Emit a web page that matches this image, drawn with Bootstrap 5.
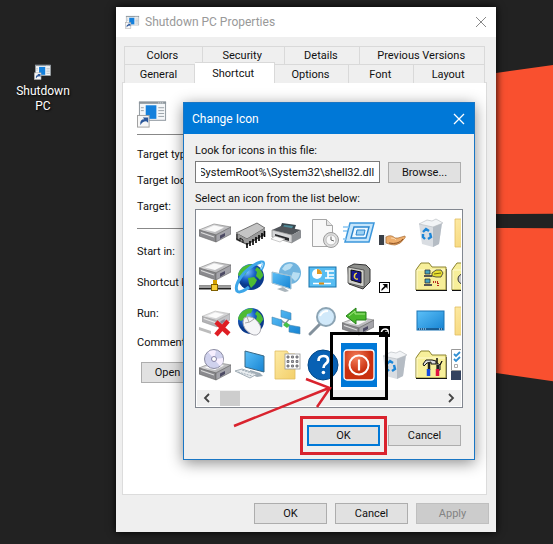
<!DOCTYPE html>
<html lang="en">
<head>
<meta charset="utf-8">
<meta name="viewport" content="width=device-width, initial-scale=1">
<title>Shutdown PC Properties</title>
<link href="https://cdn.jsdelivr.net/npm/bootstrap@5.3.0/dist/css/bootstrap.min.css" rel="stylesheet">
<style>
body{background:#222;font-family:Roboto,"Liberation Sans",sans-serif;font-size:11px;line-height:16px;color:#111}
.desktop{min-height:100vh;overflow:hidden}
.wallpaper{left:496px;top:0;width:400px;height:544px}
.shortcut-item{left:4px;top:64px;width:78px;color:#fff;font-size:12px;line-height:15px;text-shadow:1px 1px 2px #000}
.shortcut-item:hover{color:#fff}
.win{background:#efefef}
.props{left:116px;top:7px;width:380px;box-shadow:0 0 8px #000}
.win-title{font-size:12px;gap:5px}
.props .win-title{height:30px;background:#fff;color:#999;padding:0 9px}
.x-btn{border:0;background:none;padding:0;line-height:0;color:inherit}
.tab-area{padding:9px 11px 0 8px}
.tabs-line{height:18px}
.tab-btn{border:1px solid #d9d9d9;border-left-width:0;border-bottom:0;background:#efefef;padding:0 2px 0 0;color:#111;line-height:17px}
.tab-btn:first-child{border-left-width:1px}
.tab-btn.active{background:#fff;margin-top:-2px;height:21px;position:relative}
.pane{margin:0 9px 0 6px;height:413px;border:1px solid #dcdcdc;background:#fff;padding:17px 14px 0}
.pane hr{margin:0;border-color:#888;opacity:1}
.pane-icon{margin-bottom:6px}
.fields{padding-top:7px}
.fields.target{padding-bottom:8px}
.target .field{line-height:26px}
.options .field{line-height:31px}
.options .field:last-child{line-height:27px}
.dlg-btn{border:1px solid #adadad;background:#e1e1e1;width:73px;height:21px;padding:0;line-height:17px;color:#111}
.dlg-btn:disabled{background:#ccc;border-color:#bfbfbf;color:#838383}
.dlg-btn.primary{border:2px solid #0078d7}
.open-btn{margin-top:6px}
.props-foot{padding:8px 7px}
.dialog-win{left:183px;top:102px;width:292px;border:1px solid #1a76c4;box-shadow:0 3px 14px rgba(0,0,0,.45)}
.dialog-win .win-title{height:31px;background:#0078d7;color:#fff;padding:0 9px 0 8px}
.dialog-body{padding:9px 13px 13px 11px}
.dialog-label{display:block;margin-bottom:2px}
.path-input{border:1px solid #7a7a7a;background:#fff;height:22px;padding:0 5px;min-width:0;color:#111;outline:0}
.icon-list{border:1px solid #828790;background:#fff;padding:1px;margin-right:-2px;height:199px}
.icon-grid{grid-template-columns:repeat(8,36px);grid-auto-rows:44px;overflow:hidden;height:179px}
.icon-cell{border:0;background:none;padding:6px 2px;line-height:0}
.icon-cell.selected{background:#0078d7}
.icon-cell svg{width:32px;height:32px;overflow:visible}
.scroll-bar{height:16px;background:#f0f0f0;color:#555;padding:0 6px}
.thumb{width:20px;height:15px;background:#cdcdcd;margin-left:9px}
.dialog-foot{margin-top:17px}
.marks{left:0;top:0;pointer-events:none}
</style>
<script src="https://cdn.jsdelivr.net/npm/bootstrap@5.3.0/dist/js/bootstrap.bundle.min.js"></script>
</head>
<body>
<svg width="0" height="0" class="position-absolute" aria-hidden="true">
<defs>
<linearGradient id="gMetal" x1="0" y1="0" x2="1" y2="1"><stop offset="0" stop-color="#f4f4f4"/><stop offset="1" stop-color="#9a9a9e"/></linearGradient>
<linearGradient id="gScreen" x1="0" y1="0" x2="1" y2="1"><stop offset="0" stop-color="#5cc0f8"/><stop offset="1" stop-color="#1683d2"/></linearGradient>
<radialGradient id="gSea" cx=".35" cy=".3"><stop offset="0" stop-color="#7cc4ff"/><stop offset=".6" stop-color="#1a62c8"/><stop offset="1" stop-color="#0b3a8c"/></radialGradient>
<linearGradient id="gFolder" x1="0" y1="0" x2="1" y2="1"><stop offset="0" stop-color="#fdeaa4"/><stop offset="1" stop-color="#f3cf6a"/></linearGradient>
<radialGradient id="gPower" cx=".4" cy=".25"><stop offset="0" stop-color="#f5805c"/><stop offset="1" stop-color="#c9300f"/></radialGradient>
<symbol id="app" viewBox="0 0 32 28">
<rect x="2.500" y="1.500" width="27" height="19" fill="#f4f6f8" stroke="#8c959c"/><path d="M2 2.500h28" stroke="#8c959c" stroke-width="2"/><path d="M22 2.500h6" stroke="#e8e8e8" stroke-width="1" stroke-dasharray="1 1"/>
<rect x="9" y="5" width="11" height="14" fill="#1480dc"/><path d="M22 7.500h6M22 10.500h6M22 13.500h6M22 16.500h6M4 7.500h3M4 10.500h3" stroke="#9aa2a8"/>
<rect x=".5" y="15.500" width="12" height="12" fill="#f7f7f7" stroke="#a0a0a0"/><path d="M3.500 25.500q-1-6 4-6l-1.500-2h5.500v5.500l-2-1.500q-4 0-6 4z" fill="#2b579a"/>
</symbol>
<symbol id="drive" viewBox="0 0 32 32">
<path d="M0 13 15 7 32 10 17 18z" fill="url(#gMetal)" stroke="#888" stroke-width=".7"/><path d="M0 13 17 18v7L0 19z" fill="#8a8a8e" stroke="#666" stroke-width=".6"/><path d="M17 18 32 10v7L17 25z" fill="#a4a4aa" stroke="#666" stroke-width=".6"/>
<path d="m6 12.500 9-4 10 2-9 4.500z" fill="#fafafa"/><path d="m2 15.500 13 4.500" stroke="#ddd" stroke-width="1.200"/><path d="m21 18.500 5-2.500v3l-5 3z" fill="#4c4a63"/>
</symbol>
<symbol id="globe" viewBox="0 0 32 32">
<circle cx="16" cy="16" r="13" fill="url(#gSea)"/><path d="M8 6q7-4 10-2l-2 4-4 1-1 4-5 3-3-2q1-5 5-8zM13 17l6-1 3 3-2 4-4 4-2-4zM22 6q6 4 6 9l-3 4-4-4 1-4-2-2z" fill="#4dbb35"/>
</symbol>
<symbol id="bin" viewBox="0 0 32 32">
<path d="M4 7 27 5 24 27 18 30 7 27z" fill="#d9dde2"/><path d="M18 9 27 6 24 27 18 30z" fill="#b5bcc4"/><path d="m4 7 8-4 5 1 4-2 7 4-10 4z" fill="#f2f4f6" stroke="#b4b9be" stroke-width=".6"/>
<path d="m8 15 3-3 3 2M15 16l1 4-3 2M10 22l-2-2v-3" fill="none" stroke="#1c86d8" stroke-width="2.400"/>
</symbol>
<symbol id="folder" viewBox="0 0 32 32"><path d="M5 2h12l2 3h6v25H5z" fill="url(#gFolder)" stroke="#e1bd60" stroke-width=".8"/></symbol>
<symbol id="oldfolder" viewBox="0 0 32 32"><path d="M1 29V9l2-3 3-4h8l3 4h14v23z" fill="#f7ef9a" stroke="#8c8430"/><path d="M2 28V9h28" fill="none" stroke="#fffbd0"/><path d="M1 29.500h31V8" fill="none" stroke="#111"/></symbol>
</defs>
</svg>
<main class="desktop position-relative">
<svg class="wallpaper position-absolute" viewBox="0 0 400 544" aria-hidden="true"><path d="M0 73 400 17v196L0 214zM0 228l400 1v202L0 373z" fill="#f9502f"/></svg>
<a href="#" class="shortcut-item position-absolute d-flex flex-column align-items-center text-center text-decoration-none"><svg width="18" height="16" class="mb-1"><use href="#app"/></svg><span>Shutdown<br>PC</span></a>

<section class="win props position-absolute" aria-label="Shutdown PC Properties">
<header class="win-title d-flex align-items-center"><svg width="15" height="14"><use href="#app"/></svg><span class="flex-grow-1">Shutdown PC Properties</span>
<button class="x-btn" aria-label="Close"><svg width="12" height="12"><path d="m1 1 10 10M11 1 1 11" stroke="#888"/></svg></button></header>
<nav class="tab-area" role="tablist">
<div class="tabs-line d-grid" style="grid-template-columns:79fr 82fr 76fr 125fr"><button class="tab-btn">Colors</button><button class="tab-btn">Security</button><button class="tab-btn">Details</button><button class="tab-btn">Previous Versions</button></div>
<div class="tabs-line d-grid" style="grid-template-columns:71fr 80fr 75fr 65fr 71fr"><button class="tab-btn">General</button><button class="tab-btn active">Shortcut</button><button class="tab-btn">Options</button><button class="tab-btn">Font</button><button class="tab-btn">Layout</button></div>
</nav>
<div class="pane">
<svg width="31" height="28" class="pane-icon d-block"><use href="#app"/></svg>
<hr>
<div class="fields target"><div class="field">Target type:</div><div class="field">Target location:</div><div class="field">Target:</div></div>
<hr>
<div class="fields options"><div class="field">Start in:</div><div class="field">Shortcut key:</div><div class="field">Run:</div><div class="field">Comment:</div></div>
<button class="dlg-btn open-btn ms-1">Open File</button>
</div>
<footer class="props-foot d-flex justify-content-end gap-2"><button class="dlg-btn">OK</button><button class="dlg-btn">Cancel</button><button class="dlg-btn" disabled>Apply</button></footer>
</section>

<section class="win dialog-win position-absolute" role="dialog" aria-label="Change Icon">
<header class="win-title d-flex align-items-center justify-content-between"><span>Change Icon</span><button class="x-btn" aria-label="Close"><svg width="12" height="12"><path d="m1 1 10 10M11 1 1 11" stroke="#fff" stroke-width="1.300"/></svg></button></header>
<div class="dialog-body">
<label for="path" class="dialog-label">Look for icons in this file:</label>
<div class="d-flex align-items-center gap-2"><input id="path" class="path-input flex-fill" value="%SystemRoot%\System32\shell32.dll"><button class="dlg-btn">Browse...</button></div>
<div class="dialog-label mt-2" id="listlabel">Select an icon from the list below:</div>
<div class="icon-list" aria-labelledby="listlabel">
<div class="icon-grid d-grid">
<button class="icon-cell" aria-label="Drive"><svg><use href="#drive"/></svg></button>
<button class="icon-cell" aria-label="Chip"><svg viewBox="0 0 32 32"><path d="M1 17 22 7l8 5v6L12 28 1 23z" fill="#555"/><path d="M1 16 22 6l8 5-18 11z" fill="#c4c4c4" stroke="#444" stroke-width=".7"/><path d="M12 22 30 11v5L12 27zM1 16l11 6v5L1 21z" fill="#999"/><path d="M12 26v5M15 24v5M18 22v6M21 20v6M24 18v6M27 16v6M29.500 14v6" stroke="#000" stroke-width="1.600"/><path d="M2 17v5l3 2v-3l3 2v3" fill="none" stroke="#111"/></svg></button>
<button class="icon-cell" aria-label="Printer"><svg viewBox="0 0 32 32"><path d="m11 6 14 2-3 9-14-3z" fill="#39474f"/><path d="m13 8 9 1-2 5-9-2z" fill="#4f8b99"/><path d="M1 13 10 9l20 4-9 5z" fill="#51555a"/><path d="M1 13 21 18v8L1 20z" fill="#d5d6d8" stroke="#777" stroke-width=".6"/><path d="m21 18 9-5v8l-9 5z" fill="#8b8e92"/><path d="m4 17 14 4v3L4 20z" fill="#26282b"/><path d="m4 19 10 3-5 3-9-3z" fill="#fafafa" stroke="#aaa" stroke-width=".6"/></svg></button>
<button class="icon-cell" aria-label="Recent document"><svg viewBox="0 0 32 32"><path d="M5.500 2.500h14l6 6v21h-20z" fill="#f8f8f8" stroke="#a6a6a6"/><path d="M19.500 2.500v6h6" fill="#e6e6e6" stroke="#a6a6a6"/><circle cx="24" cy="23" r="7.500" fill="#ddd" stroke="#9b9b9b"/><circle cx="24" cy="23" r="5" fill="#fafafa" stroke="#aaa" stroke-width=".7"/><path d="M24 19.500V23l3 1" fill="none" stroke="#666"/></svg></button>
<button class="icon-cell" aria-label="Run"><svg viewBox="0 0 32 32"><path d="M7 6h24l-5 19H2z" fill="#c5e5fb" stroke="#3b97dc" stroke-width="1.500"/><path d="M11 10h15l-3 11H8z" fill="#eef8ff" stroke="#2c86cf" stroke-width="1.400"/><path d="M14 13h8l-1 5h-8z" fill="#9bd0f3" stroke="#2c86cf"/><path d="M0 10h6M0 14h4M0 22h3" stroke="#86c5f2" stroke-width="1.500"/></svg></button>
<button class="icon-cell" aria-label="Shared"><svg viewBox="0 0 32 32"><path d="M0 18h5v10H0z" fill="#3a4048"/><path d="M5 18h2v10H5z" fill="#e8e8e8"/><path d="M7 20q5-3 9 1h3l7-2q1 1-1 3-3 5-9 6-4 0-9-2z" fill="#eeae6c" stroke="#a66a32" stroke-width=".7"/><path d="M10 26q9 2 14-4" fill="none" stroke="#8b4f20"/><path d="M12 21q4 0 5 2" stroke="#fbd9b0" fill="none"/></svg></button>
<button class="icon-cell" aria-label="Recycle bin"><svg><use href="#bin"/></svg></button>
<button class="icon-cell" aria-label="Folder"><svg><use href="#folder" x="-1"/></svg></button>

<button class="icon-cell" aria-label="Network drive"><svg viewBox="0 0 32 32"><use href="#drive" y="-6" width="32" height="32"/><path d="M16 19v5" stroke="#d5a200" stroke-width="4"/><path d="M0 26.500h32" stroke="#222" stroke-width="4"/><path d="M0 26h32" stroke="#c8c8c8" stroke-width="1.500"/><rect x="12.500" y="23.500" width="6" height="6" fill="#f7cf35" stroke="#806000"/></svg></button>
<button class="icon-cell" aria-label="Internet"><svg viewBox="0 0 32 32"><use href="#globe"/><path d="M26 9Q31 0 26 1 18 3 9 12-1 24 2 30q3 3 12-4" fill="none" stroke="#3da6e8" stroke-width="3"/><path d="M26 8q4-7 0-6" fill="none" stroke="#b8e4ff" stroke-width="1"/></svg></button>
<button class="icon-cell" aria-label="Network computer"><svg viewBox="0 0 32 32"><circle cx="19" cy="12" r="11" fill="#71b4de"/><path d="M14 4q6-3 8 0l-3 4-5 2-3-2zM22 11l7 1q-1 6-5 8l-4-4z" fill="#b8def2"/><path d="m1 11 19 4v13L1 22z" fill="url(#gScreen)" stroke="#e6f3fb"/><path d="m1 11 19 4v13L1 22z" fill="none" stroke="#5788a4" stroke-width=".5"/><path d="m6 28 8 3 4-1-6-4z" fill="#aab5bc"/></svg></button>
<button class="icon-cell" aria-label="Control panel"><svg viewBox="0 0 32 32"><rect x="2" y="6" width="27" height="20" fill="#58bdf2" stroke="#1672aa"/><circle cx="10" cy="13" r="5" fill="#fff"/><path d="M10 13V8a5 5 0 0 1 5 5z" fill="#e39a22"/><path d="M18 10h3v7h-3M21 10h6M21 14h6M21 17h6M6 22.500h18" stroke="#fff" stroke-width="1.700" fill="none"/><path d="M12 22.500h5" stroke="#d98d13" stroke-width="2"/></svg></button>
<button class="icon-cell" aria-label="Screen saver"><svg viewBox="0 0 32 32"><path d="m5 6 6-3 12 1 4 4v13l-7 7-14-5z" fill="#8e8f8c" stroke="#333"/><path d="m5 6 16 3v17L5 22z" fill="#cfcfca" stroke="#444" stroke-width=".8"/><path d="m8 9 10 2v11L8 19z" fill="#19198f" stroke="#111"/><path d="M14 12q-4 3-1 6l2 0q-4 1-4-3 0-3 3-3z" fill="#ffe23e" stroke="#ffe23e" stroke-width=".7"/></svg></button>
<button class="icon-cell" aria-label="Shortcut overlay"><svg viewBox="0 0 32 32"><rect x=".5" y="21.500" width="10" height="10" fill="#fff" stroke="#000"/><path d="M2.500 30v-2l3-3-2-2h5v5l-1.500-2z" fill="#000"/></svg></button>
<button class="icon-cell" aria-label="Network folder"><svg viewBox="0 0 32 32"><use href="#oldfolder"/><path d="M10 9h5v4h-5zM10 18h5v4h-5z" fill="#45a2bd" stroke="#333" stroke-width=".8"/><path d="M9 15h8M9 24h8" stroke="#555" stroke-width="2"/><path d="m17 12 4-3h5l2 3-2 4h-5l-4-1z" fill="#e8df32" stroke="#333" stroke-width=".8"/><path d="m19 13 7-1" stroke="#776f10"/><path d="M18 21h5v4" stroke="#b52b20" fill="none" stroke-width="2" stroke-dasharray="1 1"/></svg></button>
<button class="icon-cell" aria-label="Settings folder"><svg viewBox="0 0 32 32"><use href="#oldfolder"/><circle cx="12" cy="18" r="5" fill="#ccc" stroke="#333"/></svg></button>

<button class="icon-cell" aria-label="Disconnected drive"><svg viewBox="0 0 32 32"><g opacity=".65"><use href="#drive" y="-2" x="3" width="28" height="32"/><path d="m0 22 12 4v3L0 25z" fill="#999"/></g><path d="m17 17 13 12M29 16 17 30" stroke="#df1e24" stroke-width="4.500"/></svg></button>
<button class="icon-cell" aria-label="Internet mouse"><svg viewBox="0 0 32 32"><use href="#globe"/><path d="M9 13q5-3 11 1 8 7 5 13-3 5-9 2-8-5-8-12z" fill="#f5f5f7" stroke="#a9a9b0"/><path d="M10 18q5 0 9-4M14 17l-2-5" stroke="#aaa" fill="none"/></svg></button>
<button class="icon-cell" aria-label="Network"><svg viewBox="0 0 32 32"><path d="M9 15 20 22M14 19l5-6" stroke="#8c9aa4" stroke-width="1.500"/><path d="m10 5 10 3v7l-10-3zM1 12l10 3v7L1 19zM18 20l11 2v7l-11-2z" fill="url(#gScreen)" stroke="#4a88ae" stroke-width=".6"/><path d="m12 20 3-3 4 3-3 3z" fill="#45c048"/></svg></button>
<button class="icon-cell" aria-label="Search"><svg viewBox="0 0 32 32"><path d="M13 19 3 29" stroke="#83919c" stroke-width="3" stroke-linecap="round"/><circle cx="19" cy="12" r="9" fill="#d1e9fa" stroke="#8ca4b4" stroke-width="2"/><path d="M13 11q2-5 8-5" stroke="#fff" stroke-width="2" fill="none"/></svg></button>
<button class="icon-cell" aria-label="Restore drive"><svg viewBox="0 0 32 32"><use href="#drive" y="5" x="-1" width="32" height="32"/><path d="m3 11 10-8v4h10v8H13v4z" fill="#49b72b" stroke="#26811a"/><path d="m6 11 6-5v3h10" fill="none" stroke="#a6e987"/></svg></button>
<button class="icon-cell" aria-label="Share overlay"><svg viewBox="0 0 32 32"><path d="M0 21h11v11H0z" fill="#000"/><path d="M2 30q0-6 4-6t3 4l-2-1-1 3" stroke="#fff" fill="none" stroke-width="1.500"/></svg></button>
<button class="icon-cell" aria-label="Desktop"><svg viewBox="0 0 32 32"><rect x="2" y="6" width="27" height="19" fill="url(#gScreen)" stroke="#1b75b5"/><path d="M3 24h25" stroke="#164f80" stroke-width="1.500"/><path d="M4 24h8M24 24h4" stroke="#d5efff" stroke-dasharray="1 1"/></svg></button>
<button class="icon-cell" aria-label="Folder"><svg><use href="#folder" x="-1"/></svg></button>

<button class="icon-cell" aria-label="CD drive"><svg viewBox="0 0 32 32"><use href="#drive" y="6" width="32" height="32"/><circle cx="15" cy="10" r="9.500" fill="#cfd1ed" stroke="#8b8ba2"/><path d="M15 10 9 3q5-3 8-1zM15 10l6 7q4-3 3-8z" fill="#f6eefe"/><circle cx="15" cy="10" r="2.500" fill="#fff" stroke="#8884a8"/></svg></button>
<button class="icon-cell" aria-label="Computer"><svg viewBox="0 0 32 32"><path d="m10 2 19 5v16l-19-5z" fill="url(#gScreen)" stroke="#386885"/><path d="m15 21 10 3 3 3-6 1-7-3z" fill="#9eabb5"/><path d="m0 22 7-2 15 5-7 4z" fill="#e9edf0" stroke="#a3aeb6"/><path d="m3 23 14 4M7 21l12 4" stroke="#a3b0ba" stroke-dasharray="2 1"/></svg></button>
<button class="icon-cell" aria-label="Programs folder"><svg viewBox="0 0 32 32"><use href="#folder" x="-1" width="32" height="32"/><rect x="14" y="5" width="15" height="15" fill="#fff" stroke="#999" stroke-width=".8"/><path d="M16 7h2v2h-2zM20.500 7h2v2h-2zM25 7h2v2h-2zM16 11.500h2v2h-2zM20.500 11.500h2v2h-2zM25 11.500h2v2h-2zM16 16h2v2h-2zM20.500 16h2v2h-2zM25 16h2v2h-2z" fill="#a8a8bd" stroke="#666" stroke-width=".8"/></svg></button>
<button class="icon-cell" aria-label="Help"><svg viewBox="0 0 32 32"><circle cx="16" cy="16" r="15" fill="#0861b4" stroke="#034887"/><path d="M11.500 12q0-5 5-5 4.500 0 4.500 4 0 2.500-2.500 4-2 1.500-2 4" fill="none" stroke="#fff" stroke-width="2.700"/><circle cx="16.400" cy="23.500" r="1.800" fill="#fff"/></svg></button>
<button class="icon-cell selected" aria-label="Shut down"><svg viewBox="0 0 32 32"><rect x="1" y="1" width="30" height="30" rx="3" fill="url(#gPower)" stroke="#fff" stroke-width="1.300"/><circle cx="16" cy="16" r="9.500" fill="none" stroke="#fff" stroke-width="2"/><path d="M16 10.500v11" stroke="#fff" stroke-width="2.200"/></svg></button>
<button class="icon-cell" aria-label="Recycle bin"><svg><use href="#bin"/></svg></button>
<button class="icon-cell" aria-label="Tools folder"><svg viewBox="0 0 32 32"><use href="#oldfolder"/><path d="m8 15 3-4h6l4 1v3h-5v-2l-4 1-3 3zM22 9v5l3 2 2-4-2 4v5h-3v-6z" fill="#ddd" stroke="#111"/><path d="M14 14v7M23 16v5" stroke="#222" stroke-width="2.500"/><path d="M13.500 20v7" stroke="#164be0" stroke-width="3.500"/><path d="M22.500 20v7" stroke="#e01442" stroke-width="3.500"/></svg></button>
<button class="icon-cell" aria-label="Checklist"><svg viewBox="0 0 32 32"><path d="M.5.500h24v21H.500z" fill="#fff" stroke="#999"/><path d="m3 5 2 2 4-4M3 10l2 2 4-4" stroke="#2f8fd3" stroke-width="1.800" fill="none"/><path d="M3.500 15.500h3v3h-3z" stroke="#aaa" fill="none"/><path d="M0 22h24v9H0z" fill="#33425f"/></svg></button>
</div>
<div class="scroll-bar d-flex align-items-center"><svg width="8" height="10"><path d="M6 1 2 5l4 4" fill="none" stroke="#444" stroke-width="1.800"/></svg><span class="thumb"></span><svg width="8" height="10" class="ms-auto"><path d="m2 1 4 4-4 4" fill="none" stroke="#444" stroke-width="1.800"/></svg></div>
</div>
<div class="dialog-foot d-flex justify-content-end gap-2"><button class="dlg-btn primary">OK</button><button class="dlg-btn">Cancel</button></div>
</div>
<svg class="marks position-absolute" width="290" height="355" viewBox="184 103 290 355" aria-hidden="true"><rect x="331.500" y="333.500" width="55" height="65" fill="none" stroke="#000" stroke-width="3"/><rect x="301.500" y="417.500" width="84" height="36" fill="none" stroke="#d9232e" stroke-width="3"/><path d="M234 426 329 388M306 379l24 9-13 19" fill="none" stroke="#d9232e" stroke-width="2.500"/></svg>
</section>
</main>
<script>
const pathBox=document.getElementById('path');
pathBox.scrollLeft=pathBox.scrollWidth;
</script>
</body>
</html>
